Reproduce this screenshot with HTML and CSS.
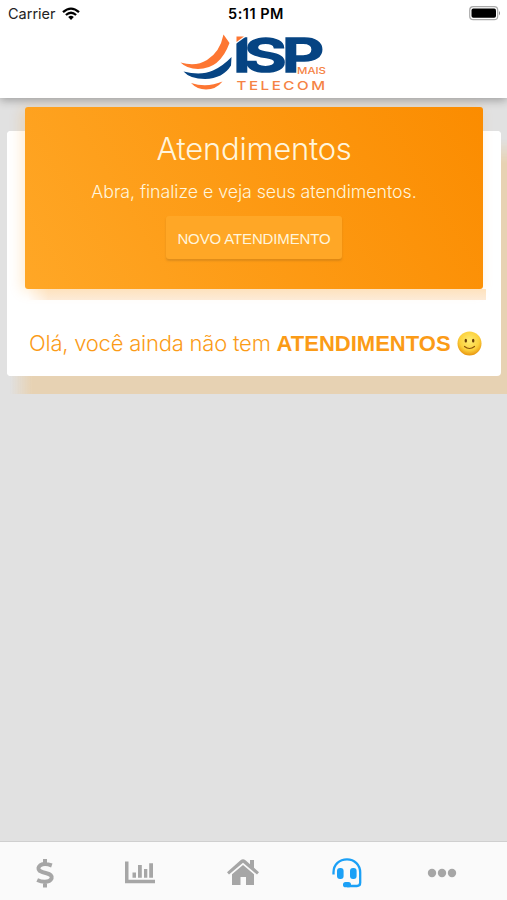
FILE: index.html
```html
<!DOCTYPE html>
<html lang="pt-BR">
	<head>
		<meta charset="utf-8">
		<meta name="viewport" content="width=device-width, initial-scale=1">
		<title>Atendimentos</title>
		<link rel="stylesheet" href="styles.css">
	</head>

	<body>
		<header class="header">
			<div class="statusbar">
				<div class="carrier">
					<span>Carrier</span>
					<svg width="18" height="14" viewBox="0 0 18 14">
						<path d="M1 5.2Q9 -2 17 5.2M3.9 8Q9 3.6 14.1 8" fill="none" stroke="#000" stroke-width="2.3"/>
						<path d="M6.2 10Q9 7.7 11.8 10L9 13z"/>
					</svg>
				</div>
				<div class="clock">5:11 PM</div>
				<svg class="battery" width="32" height="15" viewBox="0 0 32 15">
					<rect x=".7" y=".7" width="28" height="13" rx="3.5" fill="#fff" stroke="#aaa" stroke-width="1.2"/>
					<rect x="2.5" y="2.6" width="24.5" height="9.2" rx="1.8"/>
					<path d="M30 5q2 2.2 0 4.4z" fill="#888"/>
				</svg>
			</div>

			<svg class="logo" width="150" height="71" viewBox="180 27 150 71">
				<g fill="#fd7632">
					<path d="M223.5 34.5L229.5 43Q220 69 198 69Q187 69 180.500 62.500Q196 67 207 60Q220 52 223.500 34.500z"/>
					<path d="M191 83Q207 88 222.500 81.500Q216 89.500 206 89.500Q197 89.500 191 83z"/>
				</g>
				<path fill="#064483" d="M231.500 57L231 65.500Q223 78.500 205 79Q190 79 183.500 71.500Q201 76 213 70.500Q223 66 231.500 57z"/>
				<g class="logo-name" transform="translate(0 72) scale(1.4 1)">
					<text x="166.200 174.200 201.300" y="0">ISP</text>
				</g>
				<path fill="#fff" d="M234 35h12v1.500L235 44.500h-1z"/>
				<path fill="#fd7632" d="M236.500 36.500h7.500l-7.500 5.500z"/>
				<text class="logo-sub" x="297" y="73.500" font-size="9.500" textLength="29" lengthAdjust="spacingAndGlyphs">MAIS</text>
				<text class="logo-sub logo-telecom" x="236.500" y="89.800" font-size="12" textLength="91" lengthAdjust="spacingAndGlyphs">TELECOM</text>
			</svg>
		</header>

		<main class="content">
			<div class="card">
				<div class="banner">
					<h1>Atendimentos</h1>
					<p>Abra, finalize e veja seus atendimentos.</p>
					<button class="btn-novo">NOVO ATENDIMENTO</button>
				</div>
				<div class="empty">
					<span class="empty-text">Olá, você ainda não tem</span>
					<b>ATENDIMENTOS</b>
					<svg width="25" height="25" viewBox="0 0 25 25">
						<defs>
							<radialGradient id="face" cx=".5" cy=".38" r=".62">
								<stop offset="0" stop-color="#ffed73"/>
								<stop offset=".65" stop-color="#fcd13c"/>
								<stop offset="1" stop-color="#e8940f"/>
							</radialGradient>
						</defs>
						<circle cx="12.500" cy="12.500" r="12" fill="url(#face)"/>
						<ellipse cx="8.800" cy="9.700" rx="1.200" ry="1.900" fill="#6b3e08"/>
						<ellipse cx="16.200" cy="9.700" rx="1.200" ry="1.900" fill="#6b3e08"/>
						<path d="M7.500 15.500Q12.500 19.500 17.500 15.500" fill="none" stroke="#8a5208" stroke-width="1.200" stroke-linecap="round"/>
					</svg>
				</div>
			</div>
		</main>

		<nav class="tabs">
			<a class="tab">
				<svg width="20" height="30" viewBox="-1 0 20 30">
					<path d="M15.800 7.500Q8.500 4.800 4.300 7.300Q1 10.200 3.600 12.800Q6 14.200 10.500 15.300Q16.500 16.800 15.600 20.300Q14 23.700 8.800 23.700Q5 23.700 1.200 22M9 6V1M9 24V29.500" fill="none" stroke="#a6a6a6" stroke-width="4"/>
				</svg>
			</a>
			<a class="tab">
				<svg width="30" height="24" viewBox="0 0 30 24" fill="#a6a6a6">
					<path d="M0 .5H3.500V18.800H30V22.300H0zM7.500 11.500H11V16.800H7.500zM13 4H16.800V16.800H13zM19 8H22.300V16.800H19zM24.200 2.200H28V16.800H24.200z"/>
				</svg>
			</a>
			<a class="tab">
				<svg width="34" height="28" viewBox="0 0 34 28" fill="#a6a6a6">
					<path d="M17 .2Q18.200 .2 19.500 1.300L24 5.200V1H28V8.700L33 13.200L31 15.600L17 3.800L3 15.600L1 13.200L14.500 1.300Q15.800 .2 17 .2z"/>
					<path d="M17 6L28 15.200V26H20V18H14.500V26H6V15.200z"/>
				</svg>
			</a>
			<a class="tab">
				<svg width="32" height="32" viewBox="0 0 32 32">
					<path d="M2.500 17.500V15.500C2.500 7.500 8.500 2.300 16 2.300S29.200 8 29.200 15.500V25.500Q29.200 29 26 29H16" fill="none" stroke="#1ba0f6" stroke-width="2.300"/>
					<rect x="6" y="11" width="6.600" height="11" rx="3" fill="#1ba0f6"/>
					<rect x="19" y="11" width="6.600" height="11" rx="3" fill="#1ba0f6"/>
					<rect x="12" y="25" width="8" height="5.300" rx="2.600" fill="#1ba0f6"/>
				</svg>
			</a>
			<a class="tab">
				<svg width="30" height="10" viewBox="0 0 30 10" fill="#a6a6a6">
					<circle cx="5" cy="5" r="4.200"/>
					<circle cx="15" cy="5" r="4.200"/>
					<circle cx="25" cy="5" r="4.200"/>
				</svg>
			</a>
		</nav>
	</body>
</html>
```
FILE: styles.css
```css
* { box-sizing: border-box; }

body {
	margin: 0;
	height: 100vh;
	display: flex;
	flex-direction: column;
	overflow: hidden;
	background-color: #e1e1e1;
	font-family: Inter, "Liberation Sans", sans-serif;
}

.header {
	height: 98px;
	flex: none;
	background-color: #fff;
	box-shadow: 0 2px 9px rgba(0,0,0,0.32);
}

.statusbar {
	display: grid;
	grid-template-columns: 1fr auto 1fr;
	align-items: center;
	height: 27px;
	padding: 0 6px 0 8px;
	font-size: 14.5px;
	color: #222;
}

.carrier {
	display: flex;
	align-items: center;
	gap: 6px;
}

.clock {
	padding-left: 3px;
	font-size: 14.5px;
	font-weight: 600;
	letter-spacing: 0.5px;
	color: #000;
}

.battery { justify-self: end; }

.logo {
	display: block;
	margin-left: 180px;
}

.logo-name text {
	fill: #064483;
	stroke: #064483;
	stroke-width: 2px;
	vector-effect: non-scaling-stroke;
	font-weight: 600;
	font-size: 47px;
}

.logo-sub {
	fill: #f58345;
	font-weight: 500;
}

.logo-telecom { letter-spacing: 2px; }

.content {
	flex: 1;
	padding: 33px 6px 0 7px;
}

.card {
	position: relative;
	z-index: 0;
	height: 245px;
	background-color: #fff;
	border-radius: 4px;
}

/* orange glow under the card */
.card::before {
	content: "";
	position: absolute;
	z-index: -2;
	left: 3px;
	right: -6px;
	top: 8px;
	bottom: -18px;
	background: linear-gradient(to right, rgba(231,210,179,0), #e7d2b3 22px);
	-webkit-mask-image: linear-gradient(transparent, #000 24px);
	mask-image: linear-gradient(transparent, #000 24px);
}

.card::after {
	content: "";
	position: absolute;
	z-index: -1;
	inset: 0;
	background-color: #fff;
	border-radius: 4px;
}

.banner {
	position: relative;
	top: -24px;
	height: 182px;
	margin: 0 18px;
	padding-top: 24px;
	border-radius: 3px;
	text-align: center;
	color: #fff5dc;
	background: linear-gradient(60deg, #ffa726, #fb8c00);
	box-shadow: -3px 2px 14px rgba(255,152,0,0.2);
}

.banner::before {
	content: "";
	position: absolute;
	left: 3px;
	right: -3px;
	top: 182px;
	height: 11px;
	background: linear-gradient(#fee2bd, #fdebd8);
	-webkit-mask-image: linear-gradient(to right, transparent, #000 20px);
	mask-image: linear-gradient(to right, transparent, #000 20px);
}

.banner h1 {
	margin: 0;
	font-size: 31px;
	line-height: 35px;
	font-weight: 300;
	letter-spacing: -0.25px;
}

.banner p {
	margin: 16px 0 0;
	font-size: 17.8px;
	line-height: 20px;
	font-weight: 300;
	letter-spacing: -0.05px;
}

.btn-novo {
	display: block;
	width: 176px;
	height: 43px;
	margin: 14px auto 0;
	padding: 2px 0 0;
	border: 0;
	border-radius: 3px;
	background-color: #ffa726;
	box-shadow: 0 2px 2px rgba(130,90,30,0.25);
	color: #fff5dc;
	font-family: "Liberation Sans", sans-serif;
	font-size: 15px;
	letter-spacing: -0.13px;
}

.empty {
	display: flex;
	align-items: center;
	height: 28px;
	margin: 16px 18px 0 22px;
	font-size: 22px;
	color: #fb9b17;
	white-space: nowrap;
}

.empty svg { flex: none; }

.empty-text {
	font-weight: 300;
	letter-spacing: -0.22px;
}

.empty b {
	margin: 2px 6px 0 6px;
	font-family: "Liberation Sans", sans-serif;
}

.tabs {
	display: grid;
	grid-template-columns: 90px 100px 106px 102px 88px;
	flex: none;
	height: 59px;
	padding-top: 4px;
	border-top: 1px solid #cfcfcf;
	background-color: #fafafa;
}

.tab {
	display: flex;
	align-items: center;
	justify-content: center;
}
```
